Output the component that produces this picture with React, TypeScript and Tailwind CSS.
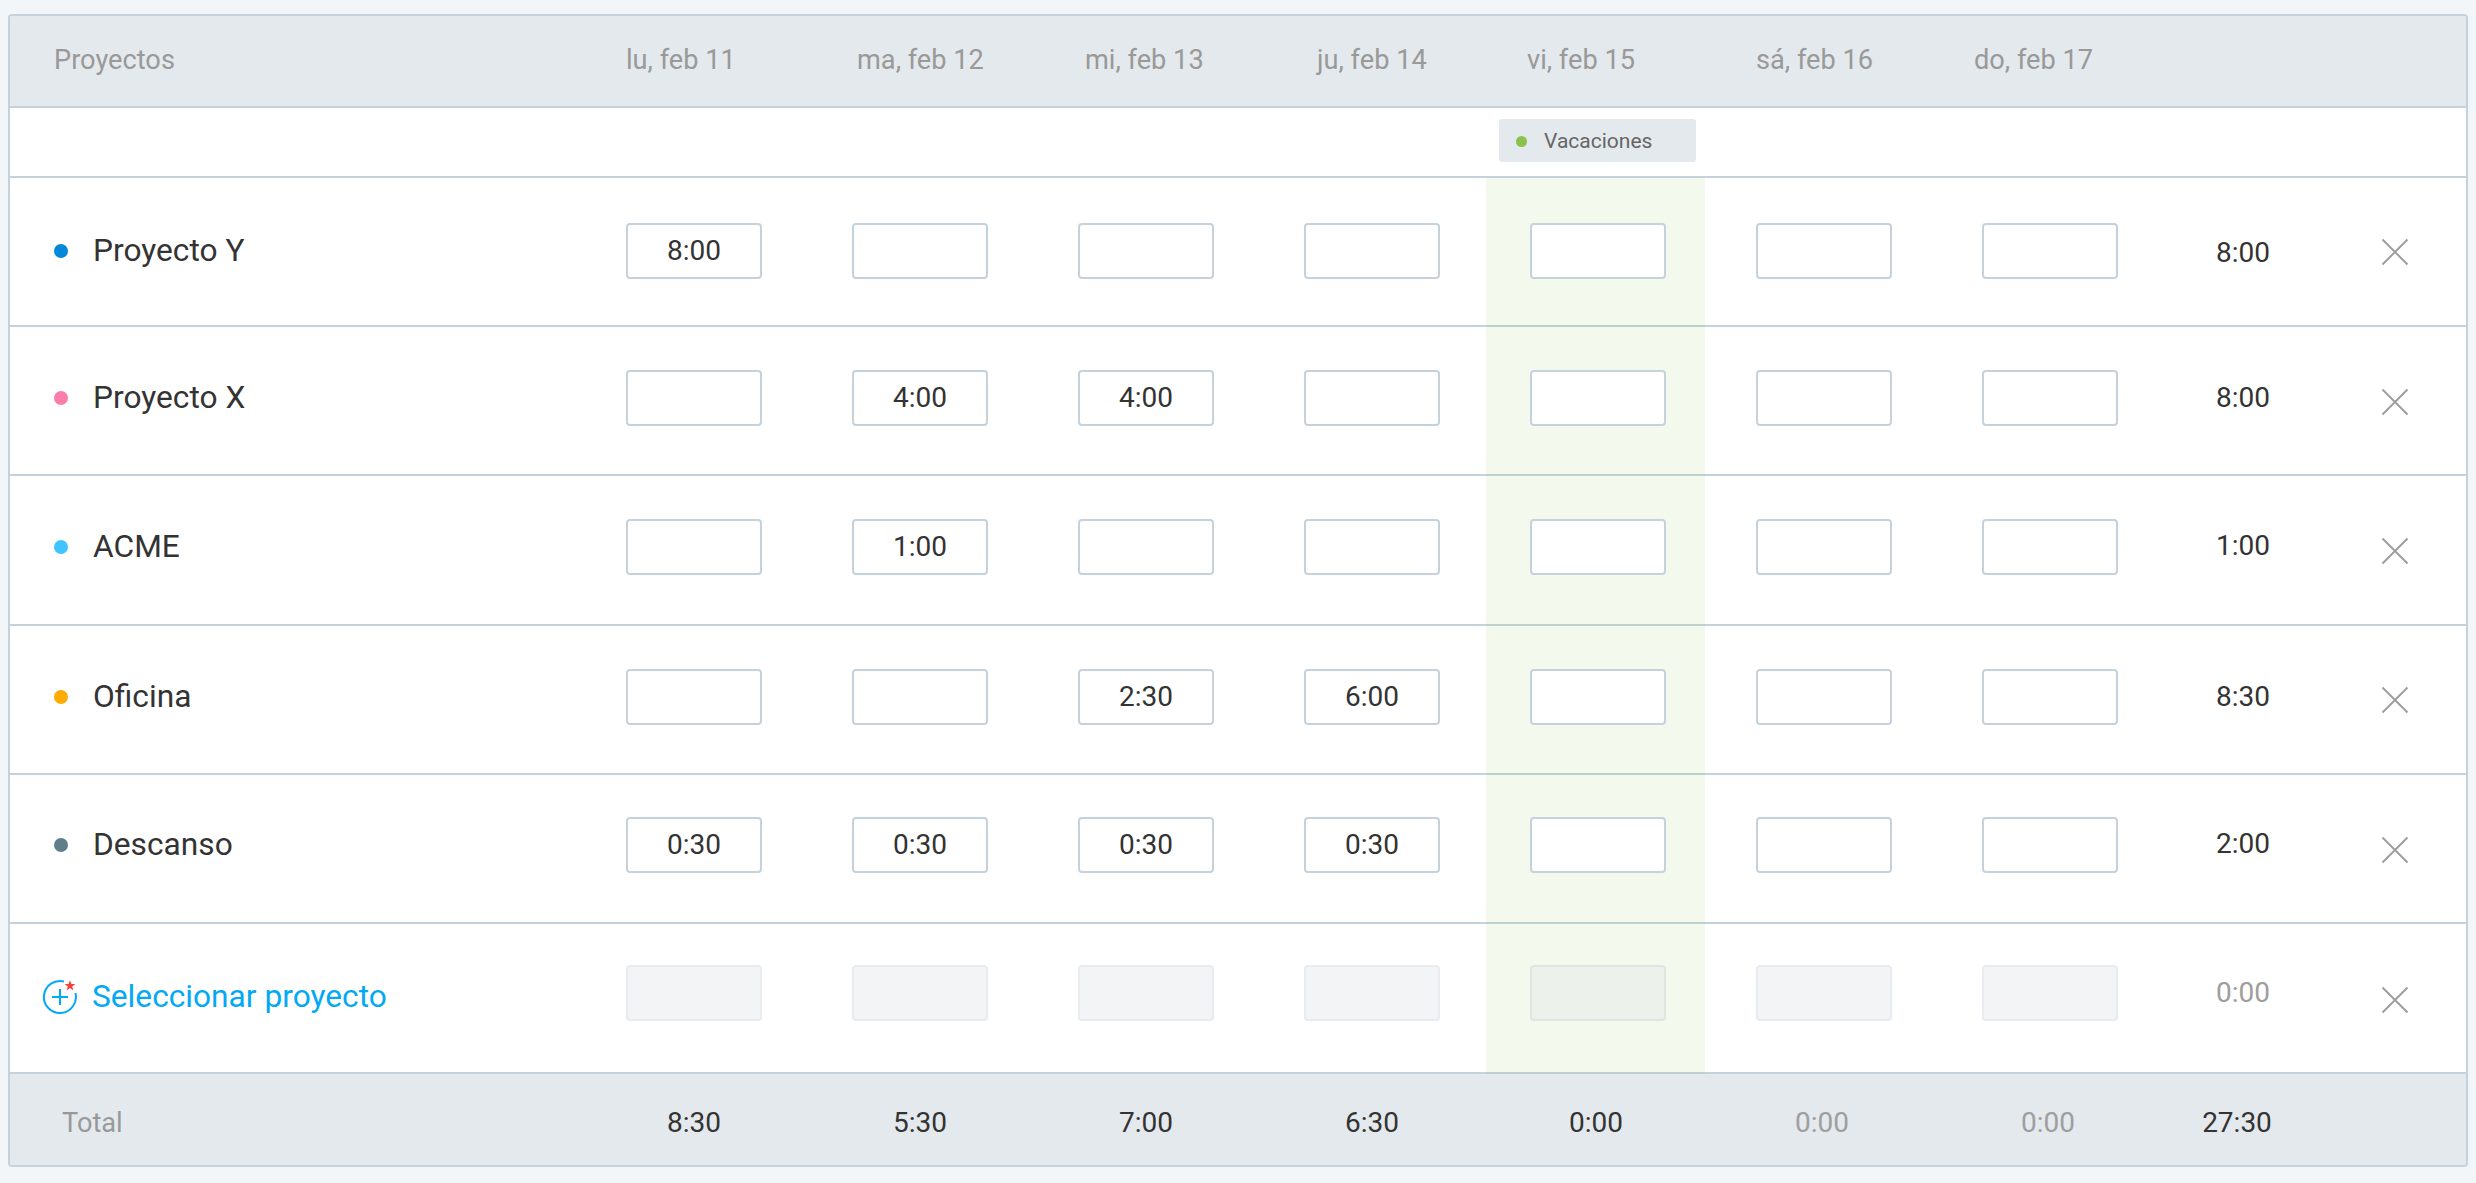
const days = ["lu, feb 11", "ma, feb 12", "mi, feb 13", "ju, feb 14", "vi, feb 15", "sá, feb 16", "do, feb 17"];

const projects = [
  { name: "Proyecto Y", dot: "bg-[#0288d9]", values: ["8:00", "", "", "", "", "", ""], total: "8:00", pad: "pb-[1px]", totalPad: "pt-[3px]" },
  { name: "Proyecto X", dot: "bg-[#fb7dab]", values: ["", "4:00", "4:00", "", "", "", ""], total: "8:00", pad: "pb-[6px]", totalPad: "pb-[6px]" },
  { name: "ACME", dot: "bg-[#40c4ff]", values: ["", "1:00", "", "", "", "", ""], total: "1:00", pad: "pb-[6px]", totalPad: "pb-[7px]" },
  { name: "Oficina", dot: "bg-[#ffab00]", values: ["", "", "2:30", "6:00", "", "", ""], total: "8:30", pad: "pb-[5px]", totalPad: "pb-[5px]" },
  { name: "Descanso", dot: "bg-[#607d8b]", values: ["0:30", "0:30", "0:30", "0:30", "", "", ""], total: "2:00", pad: "pb-[8px]", totalPad: "pb-[10px]" },
];

const totals = ["8:30", "5:30", "7:00", "6:30", "0:00", "0:00", "0:00"];

const CloseIcon = () => (
  <svg width="28" height="28" viewBox="0 0 28 28" fill="none" stroke="#9e9e9e" strokeWidth="2">
    <path d="M1.5 1.5 L26.5 26.5 M26.5 1.5 L1.5 26.5" />
  </svg>
);

const AddIcon = () => (
  <svg width="36" height="36" viewBox="0 0 36 36" fill="none">
    <path d="M22 2.5 A16 16 0 1 0 33.4 14" stroke="#03a9f4" strokeWidth="2" />
    <path d="M18 10 V26 M10 18 H26" stroke="#03a9f4" strokeWidth="2" />
    <path d="M28 1.2 L29.4 5 L33.4 5 L30.2 7.4 L31.4 11.4 L28 9 L24.6 11.4 L25.8 7.4 L22.6 5 L26.6 5 Z" fill="#f44336" />
  </svg>
);

const Row = ({ project }: { project: (typeof projects)[number] }) => (
  <div className="flex h-[149.4px] border-b-2 border-[#c5d2dc]">
    <div className={`flex w-[571px] items-center gap-[25px] pl-[44px] ${project.pad}`}>
      <span className={`h-[14px] w-[14px] rounded-full ${project.dot}`}></span>
      <span className="text-[31.7px] text-[#333]">{project.name}</span>
    </div>
    {project.values.map((value, i) => (
      <div
        key={i}
        className={
          i === 4
            ? `relative -mb-[2px] ml-px mr-[6px] flex w-[219px] items-center border-b-2 border-transparent bg-[#8bc34a]/10 pl-[44px] ${project.pad}`
            : `flex w-[226px] items-center pl-[45px] ${project.pad}`
        }
      >
        <div className="flex h-[56px] w-[136px] items-center justify-center rounded-[4px] border-2 border-[#c5d2dc] bg-white text-[28px] text-[#333]">
          {value}
        </div>
      </div>
    ))}
    <div className={`flex w-[160px] items-center justify-center text-[28px] text-[#333] ${project.totalPad}`}>{project.total}</div>
    <div className="flex flex-1 items-center justify-center pt-[2px]">
      <CloseIcon />
    </div>
  </div>
);

export default function App() {
  return (
    <div className="h-[1183px] bg-[#f2f6f9] pl-[8px] pr-[8px] pt-[14px] font-['Roboto',sans-serif]">
      <div className="overflow-hidden rounded-[4px] border-2 border-[#c5d2dc] bg-white">
        {/* header */}
        <div className="grid h-[92px] grid-cols-[616px_231px_228px_232px_210px_229px_218px_1fr] items-center border-b-2 border-[#c5d2dc] bg-[#e4e9ed] pb-px text-[27.2px] text-[#999]">
          <div className="pl-[44px]">Proyectos</div>
          {days.map((day) => (
            <div key={day}>{day}</div>
          ))}
        </div>

        <div className="flex h-[69.5px] items-start border-b-2 border-[#c5d2dc] pl-[1489px] pt-[11px]">
          <div className="flex h-[43px] w-[197px] items-center gap-[17px] rounded-[3px] bg-[#e4e9ed] pl-[17px] pt-[2px] text-[21px] text-[#666]">
            <span className="h-[11px] w-[11px] rounded-full bg-[#8bc34a]"></span>
            Vacaciones
          </div>
        </div>

        {projects.map((project) => (
          <Row key={project.name} project={project} />
        ))}

        <div className="flex h-[149.4px] border-b-2 border-[#c5d2dc]">
          <div className="flex w-[571px] items-center gap-[14px] pb-[3px] pl-[32px]">
            <AddIcon />
            <span className="text-[31.7px] text-[#03a9f4]">Seleccionar proyecto</span>
          </div>
          {days.map((day, i) => (
            <div
              key={day}
              className={
                i === 4
                  ? "relative -mb-[2px] ml-px mr-[6px] flex w-[219px] items-center border-b-2 border-transparent bg-[#8bc34a]/10 pb-[11px] pl-[44px]"
                  : "flex w-[226px] items-center pb-[11px] pl-[45px]"
              }
            >
              <div
                className={
                  i === 4
                    ? "h-[56px] w-[136px] rounded-[4px] border-2 border-[#e0e5e2] bg-[#edf1ec]"
                    : "h-[56px] w-[136px] rounded-[4px] border-2 border-[#e8ebef] bg-[#f3f4f6]"
                }
              ></div>
            </div>
          ))}
          <div className="flex w-[160px] items-center justify-center pb-[10px] text-[28px] text-[#9e9e9e]">0:00</div>
          <div className="flex flex-1 items-center justify-center pt-[4px]">
            <CloseIcon />
          </div>
        </div>

        {/* totals */}
        <div className="flex h-[91px] items-center bg-[#e4e9ed] pt-[7px] text-[28px] text-[#333]">
          <div className="w-[571px] pl-[52px] pt-[2px] text-[27.2px] text-[#999]">Total</div>
          <div className="w-[226px] pl-[45px]"><div className="w-[136px] text-center">{totals[0]}</div></div>
          <div className="w-[226px] pl-[45px]"><div className="w-[136px] text-center">{totals[1]}</div></div>
          <div className="w-[226px] pl-[45px]"><div className="w-[136px] text-center">{totals[2]}</div></div>
          <div className="w-[226px] pl-[45px]"><div className="w-[136px] text-center">{totals[3]}</div></div>
          <div className="w-[226px] pl-[43px]"><div className="w-[136px] text-center">{totals[4]}</div></div>
          <div className="w-[226px] pl-[43px] text-[#9e9e9e]"><div className="w-[136px] text-center">{totals[5]}</div></div>
          <div className="w-[226px] pl-[43px] text-[#9e9e9e]"><div className="w-[136px] text-center">{totals[6]}</div></div>
          <div className="w-[148px] text-center">27:30</div>
        </div>
      </div>
    </div>
  );
}
